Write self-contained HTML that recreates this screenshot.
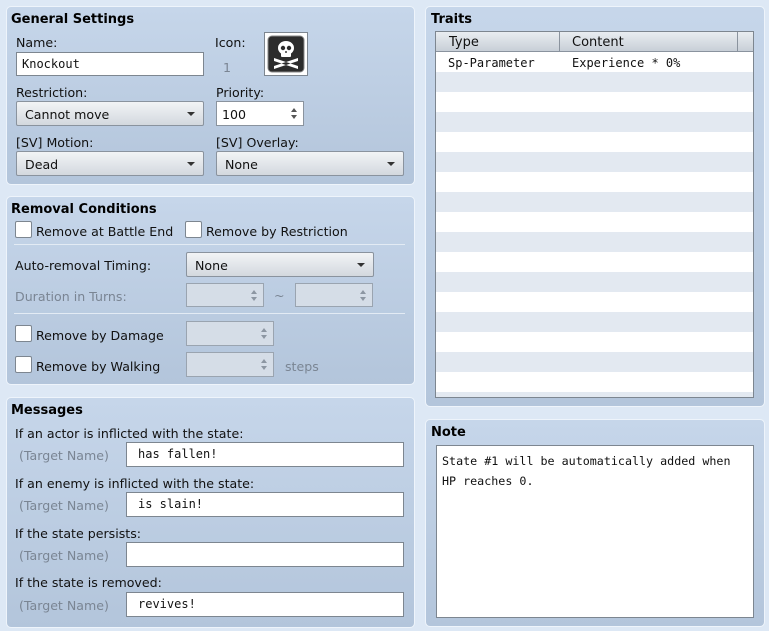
<!DOCTYPE html>
<html><head><meta charset="utf-8"><style>
*{box-sizing:border-box;margin:0;padding:0}
body{width:769px;height:631px;background:#dde8f5;font-family:"DejaVu Sans","Liberation Sans",sans-serif;font-size:12.6px;color:#111;position:relative;overflow:hidden}
.p{position:absolute;border:1px solid #eef4fb;border-radius:5px;background:linear-gradient(#c6d6ea,#b3c5db)}
.t{position:absolute;font-weight:bold;font-size:13px;color:#000;margin-top:2px}
.l{position:absolute;font-size:12.6px;white-space:nowrap;margin-top:2px}
.g{color:#7a8593}
.in{position:absolute;background:#fff;border:1px solid #7d8690;font-family:"DejaVu Sans Mono","Liberation Mono",monospace;font-size:12px;padding-left:5px;line-height:23px}
.sel{position:absolute;border:1px solid #8a939e;border-radius:2px;background:linear-gradient(#f2f4f6,#d3d8de);padding-left:8px;line-height:25px;font-size:12.6px}
.sel:after{content:"";position:absolute;right:8px;top:10px;border-left:4px solid transparent;border-right:4px solid transparent;border-top:4px solid #333}
.sp{position:absolute;border:1px solid #8a939e;background:#fff;line-height:25px;padding-left:5px;font-size:12.6px}
.sp.d{background:#d5dde7;border-color:#9aa4b0}
.sp:before{content:"";position:absolute;right:6px;top:6px;border-left:3px solid transparent;border-right:3px solid transparent;border-bottom:4px solid #555}
.sp:after{content:"";position:absolute;right:6px;top:13px;border-left:3px solid transparent;border-right:3px solid transparent;border-top:4px solid #555}
.sp.d:before{border-bottom-color:#8c96a2}.sp.d:after{border-top-color:#8c96a2}
.cb{position:absolute;width:17px;height:17px;background:#fff;border:1px solid #7d8690;border-radius:2px}
.sep{position:absolute;height:1px;background:#8d9bab;border-bottom:1px solid #e3ebf4}
.mono{font-family:"DejaVu Sans Mono","Liberation Mono",monospace;font-size:12px}
</style></head><body>

<div class="p" style="left:6px;top:6px;width:409px;height:179px"></div>
<div class="t" style="left:11px;top:10px">General Settings</div>
<div class="l" style="left:16px;top:33px">Name:</div>
<div class="in" style="left:16px;top:52px;width:188px;height:24px">Knockout</div>
<div class="l" style="left:215px;top:33px">Icon:</div>
<div class="l g" style="left:223px;top:58px">1</div>
<div style="position:absolute;left:264px;top:32px;width:44px;height:44px;background:#fff;border:1px solid #7d8690">
<svg width="42" height="42" viewBox="0 0 42 42" style="position:absolute;left:0;top:0">
<rect x="3" y="3" width="36" height="36" rx="4" fill="#2c2c2c" stroke="#888" stroke-width="1"/>
<g fill="#fff"><ellipse cx="21" cy="15" rx="8" ry="7"/><rect x="16" y="18" width="10" height="6" rx="1"/>
<path d="M9 25 L33 33 L33 36 L9 28 Z M33 25 L9 33 L9 36 L33 28Z"/></g>
<g fill="#2c2c2c"><circle cx="18" cy="15" r="2.2"/><circle cx="24" cy="15" r="2.2"/><rect x="20.3" y="18" width="1.4" height="2"/></g>
</svg></div>
<div class="l" style="left:16px;top:83px">Restriction:</div>
<div class="sel" style="left:16px;top:101px;width:188px;height:25px">Cannot move</div>
<div class="l" style="left:216px;top:83px">Priority:</div>
<div class="sp" style="left:216px;top:101px;width:88px;height:25px">100</div>
<div class="l" style="left:16px;top:133px">[SV] Motion:</div>
<div class="sel" style="left:16px;top:151px;width:188px;height:25px">Dead</div>
<div class="l" style="left:216px;top:133px">[SV] Overlay:</div>
<div class="sel" style="left:216px;top:151px;width:188px;height:25px">None</div>

<div class="p" style="left:6px;top:196px;width:409px;height:189px"></div>
<div class="t" style="left:11px;top:200px">Removal Conditions</div>
<div class="cb" style="left:15px;top:221px"></div><div class="l" style="left:36px;top:222px">Remove at Battle End</div>
<div class="cb" style="left:185px;top:221px"></div><div class="l" style="left:206px;top:222px">Remove by Restriction</div>
<div class="sep" style="left:14px;top:244px;width:391px"></div>
<div class="l" style="left:15px;top:256px">Auto-removal Timing:</div>
<div class="sel" style="left:186px;top:252px;width:188px;height:25px">None</div>
<div class="l g" style="left:15px;top:287px">Duration in Turns:</div>
<div class="sp d" style="left:186px;top:283px;width:78px;height:24px"></div>
<div class="l g" style="left:274px;top:286px">~</div>
<div class="sp d" style="left:295px;top:283px;width:78px;height:24px"></div>
<div class="sep" style="left:14px;top:313px;width:391px"></div>
<div class="cb" style="left:15px;top:325px"></div><div class="l" style="left:36px;top:326px">Remove by Damage</div>
<div class="sp d" style="left:186px;top:321px;width:88px;height:25px"></div>
<div class="cb" style="left:15px;top:356px"></div><div class="l" style="left:36px;top:357px">Remove by Walking</div>
<div class="sp d" style="left:186px;top:352px;width:88px;height:25px"></div>
<div class="l g" style="left:285px;top:357px">steps</div>

<div class="p" style="left:6px;top:397px;width:409px;height:231px"></div>
<div class="t" style="left:11px;top:401px">Messages</div>
<div class="l" style="left:15px;top:424px">If an actor is inflicted with the state:</div>
<div class="l g" style="left:19px;top:446px">(Target Name)</div>
<div class="in" style="left:126px;top:442px;width:278px;height:25px;padding-left:11px">has fallen!</div>
<div class="l" style="left:15px;top:474px">If an enemy is inflicted with the state:</div>
<div class="l g" style="left:19px;top:496px">(Target Name)</div>
<div class="in" style="left:126px;top:492px;width:278px;height:25px;padding-left:11px">is slain!</div>
<div class="l" style="left:15px;top:524px">If the state persists:</div>
<div class="l g" style="left:19px;top:546px">(Target Name)</div>
<div class="in" style="left:126px;top:542px;width:278px;height:25px"></div>
<div class="l" style="left:15px;top:573px">If the state is removed:</div>
<div class="l g" style="left:19px;top:596px">(Target Name)</div>
<div class="in" style="left:126px;top:592px;width:278px;height:25px;padding-left:11px">revives!</div>

<div class="p" style="left:425px;top:6px;width:340px;height:401px"></div>
<div class="t" style="left:431px;top:10px">Traits</div>
<div style="position:absolute;left:435px;top:31px;width:319px;height:367px;border:1px solid #7d8690;background:repeating-linear-gradient(#fff 0 20px,#e3e9f1 20px 40px);background-position:0 20px">
<div style="position:absolute;left:0;top:0;width:317px;height:20px;background:linear-gradient(#e9edf1,#c8cfd7);border-bottom:1px solid #8a939e"></div>
<div style="position:absolute;left:123px;top:0;width:1px;height:20px;background:#8a939e"></div>
<div style="position:absolute;left:301px;top:0;width:1px;height:20px;background:#8a939e"></div>
<div class="l" style="left:13px;top:1px;font-size:13px">Type</div>
<div class="l" style="left:136px;top:1px;font-size:13px">Content</div>
<div class="l mono" style="left:12px;top:22px">Sp-Parameter</div>
<div class="l mono" style="left:136px;top:22px">Experience * 0%</div>
</div>

<div class="p" style="left:425px;top:419px;width:340px;height:208px"></div>
<div class="t" style="left:431px;top:423px">Note</div>
<div class="mono" style="position:absolute;left:436px;top:445px;width:318px;height:173px;background:#fff;border:1px solid #7d8690;padding:5px 0 0 5px;line-height:20px;font-size:11.7px">State #1 will be automatically added when<br>HP reaches 0.</div>
</body></html>
